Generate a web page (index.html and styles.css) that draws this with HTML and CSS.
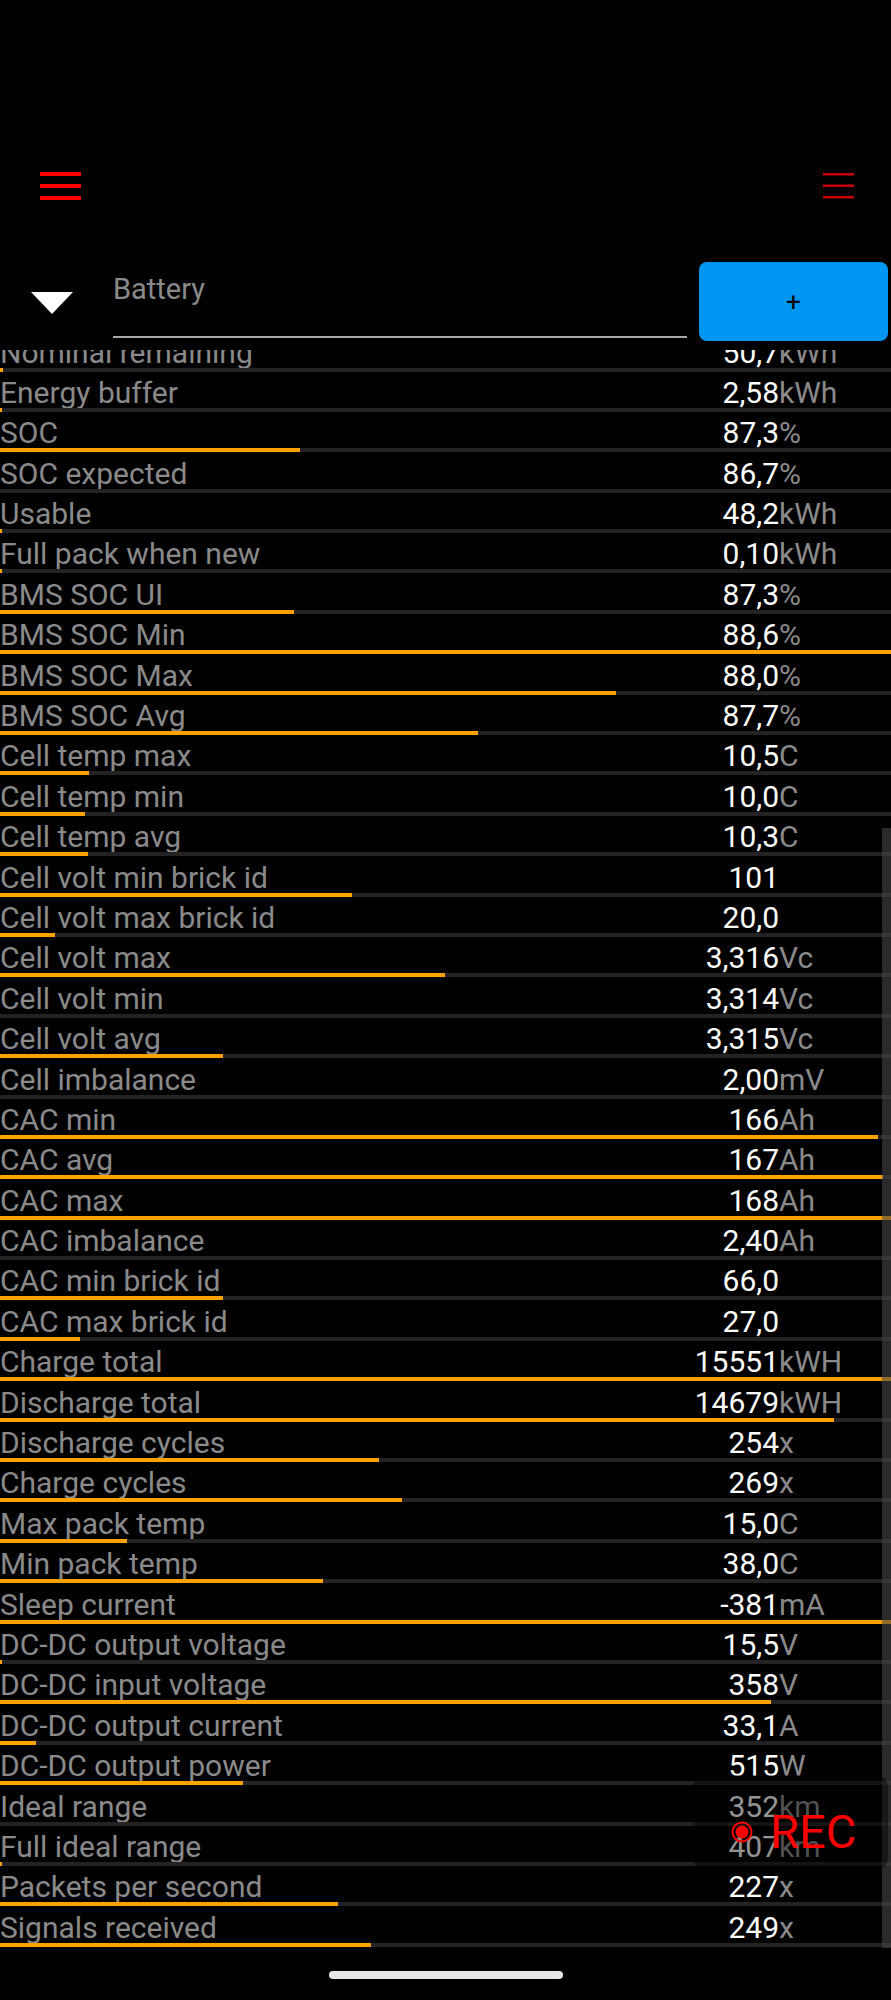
FILE: index.html
```html
<!DOCTYPE html>
<html>
<head>
<meta charset="utf-8">
<link rel="stylesheet" href="styles.css">
</head>
<body>
<div class="app">
  <div class="statusbar"></div>
  <div class="toolbar">
    <svg class="menu-left" width="41" height="28" viewBox="0 0 41 28"><rect x="0" y="0" width="41" height="4" fill="#ff0000"/><rect x="0" y="12" width="41" height="4" fill="#ff0000"/><rect x="0" y="24" width="41" height="4" fill="#ff0000"/></svg>
    <svg class="menu-right" width="31" height="26" viewBox="0 0 31 26"><rect x="0" y="0" width="31" height="2.5" fill="#c80000"/><rect x="0" y="11.5" width="31" height="2.5" fill="#c80000"/><rect x="0" y="23" width="31" height="2.5" fill="#c80000"/></svg>
  </div>
  <div class="selector">
    <div class="dropdown"><svg width="42" height="22" viewBox="0 0 42 22"><polygon points="0,0 42,0 21,22" fill="#ffffff"/></svg></div>
    <div class="field"><span class="placeholder">Battery</span></div>
    <div class="add-btn">+</div>
  </div>
  <div class="list">
    <div class="rows">
      <div class="row"><div class="line"><span class="label">Nominal remaining</span><span class="num">50,7</span><span class="unit">kWh</span></div><div class="track"><div class="fill" style="width:3px"></div></div></div>
      <div class="row"><div class="line"><span class="label">Energy buffer</span><span class="num">2,58</span><span class="unit">kWh</span></div><div class="track"><div class="fill" style="width:2px"></div></div></div>
      <div class="row"><div class="line"><span class="label">SOC</span><span class="num">87,3</span><span class="unit">%</span></div><div class="track"><div class="fill" style="width:300px"></div></div></div>
      <div class="row"><div class="line"><span class="label">SOC expected</span><span class="num">86,7</span><span class="unit">%</span></div><div class="track"><div class="fill" style="width:0px"></div></div></div>
      <div class="row"><div class="line"><span class="label">Usable</span><span class="num">48,2</span><span class="unit">kWh</span></div><div class="track"><div class="fill" style="width:2px"></div></div></div>
      <div class="row"><div class="line"><span class="label">Full pack when new</span><span class="num">0,10</span><span class="unit">kWh</span></div><div class="track"><div class="fill" style="width:2px"></div></div></div>
      <div class="row"><div class="line"><span class="label">BMS SOC UI</span><span class="num">87,3</span><span class="unit">%</span></div><div class="track"><div class="fill" style="width:294px"></div></div></div>
      <div class="row"><div class="line"><span class="label">BMS SOC Min</span><span class="num">88,6</span><span class="unit">%</span></div><div class="track"><div class="fill" style="width:891px"></div></div></div>
      <div class="row"><div class="line"><span class="label">BMS SOC Max</span><span class="num">88,0</span><span class="unit">%</span></div><div class="track"><div class="fill" style="width:616px"></div></div></div>
      <div class="row"><div class="line"><span class="label">BMS SOC Avg</span><span class="num">87,7</span><span class="unit">%</span></div><div class="track"><div class="fill" style="width:478px"></div></div></div>
      <div class="row"><div class="line"><span class="label">Cell temp max</span><span class="num">10,5</span><span class="unit">C</span></div><div class="track"><div class="fill" style="width:89px"></div></div></div>
      <div class="row"><div class="line"><span class="label">Cell temp min</span><span class="num">10,0</span><span class="unit">C</span></div><div class="track"><div class="fill" style="width:85px"></div></div></div>
      <div class="row"><div class="line"><span class="label">Cell temp avg</span><span class="num">10,3</span><span class="unit">C</span></div><div class="track"><div class="fill" style="width:88px"></div></div></div>
      <div class="row"><div class="line"><span class="label">Cell volt min brick id</span><span class="num">101</span><span class="unit"></span></div><div class="track"><div class="fill" style="width:352px"></div></div></div>
      <div class="row"><div class="line"><span class="label">Cell volt max brick id</span><span class="num">20,0</span><span class="unit"></span></div><div class="track"><div class="fill" style="width:55px"></div></div></div>
      <div class="row"><div class="line"><span class="label">Cell volt max</span><span class="num">3,316</span><span class="unit">Vc</span></div><div class="track"><div class="fill" style="width:445px"></div></div></div>
      <div class="row"><div class="line"><span class="label">Cell volt min</span><span class="num">3,314</span><span class="unit">Vc</span></div><div class="track"><div class="fill" style="width:0px"></div></div></div>
      <div class="row"><div class="line"><span class="label">Cell volt avg</span><span class="num">3,315</span><span class="unit">Vc</span></div><div class="track"><div class="fill" style="width:223px"></div></div></div>
      <div class="row"><div class="line"><span class="label">Cell imbalance</span><span class="num">2,00</span><span class="unit">mV</span></div><div class="track"><div class="fill" style="width:0px"></div></div></div>
      <div class="row"><div class="line"><span class="label">CAC min</span><span class="num">166</span><span class="unit">Ah</span></div><div class="track"><div class="fill" style="width:878px"></div></div></div>
      <div class="row"><div class="line"><span class="label">CAC avg</span><span class="num">167</span><span class="unit">Ah</span></div><div class="track"><div class="fill" style="width:883px"></div></div></div>
      <div class="row"><div class="line"><span class="label">CAC max</span><span class="num">168</span><span class="unit">Ah</span></div><div class="track"><div class="fill" style="width:891px"></div></div></div>
      <div class="row"><div class="line"><span class="label">CAC imbalance</span><span class="num">2,40</span><span class="unit">Ah</span></div><div class="track"><div class="fill" style="width:0px"></div></div></div>
      <div class="row"><div class="line"><span class="label">CAC min brick id</span><span class="num">66,0</span><span class="unit"></span></div><div class="track"><div class="fill" style="width:223px"></div></div></div>
      <div class="row"><div class="line"><span class="label">CAC max brick id</span><span class="num">27,0</span><span class="unit"></span></div><div class="track"><div class="fill" style="width:80px"></div></div></div>
      <div class="row"><div class="line"><span class="label">Charge total</span><span class="num">15551</span><span class="unit">kWH</span></div><div class="track"><div class="fill" style="width:891px"></div></div></div>
      <div class="row"><div class="line"><span class="label">Discharge total</span><span class="num">14679</span><span class="unit">kWH</span></div><div class="track"><div class="fill" style="width:834px"></div></div></div>
      <div class="row"><div class="line"><span class="label">Discharge cycles</span><span class="num">254</span><span class="unit">x</span></div><div class="track"><div class="fill" style="width:379px"></div></div></div>
      <div class="row"><div class="line"><span class="label">Charge cycles</span><span class="num">269</span><span class="unit">x</span></div><div class="track"><div class="fill" style="width:402px"></div></div></div>
      <div class="row"><div class="line"><span class="label">Max pack temp</span><span class="num">15,0</span><span class="unit">C</span></div><div class="track"><div class="fill" style="width:127px"></div></div></div>
      <div class="row"><div class="line"><span class="label">Min pack temp</span><span class="num">38,0</span><span class="unit">C</span></div><div class="track"><div class="fill" style="width:323px"></div></div></div>
      <div class="row"><div class="line"><span class="label">Sleep current</span><span class="num">-381</span><span class="unit">mA</span></div><div class="track"><div class="fill" style="width:891px"></div></div></div>
      <div class="row"><div class="line"><span class="label">DC-DC output voltage</span><span class="num">15,5</span><span class="unit">V</span></div><div class="track"><div class="fill" style="width:2px"></div></div></div>
      <div class="row"><div class="line"><span class="label">DC-DC input voltage</span><span class="num">358</span><span class="unit">V</span></div><div class="track"><div class="fill" style="width:771px"></div></div></div>
      <div class="row"><div class="line"><span class="label">DC-DC output current</span><span class="num">33,1</span><span class="unit">A</span></div><div class="track"><div class="fill" style="width:36px"></div></div></div>
      <div class="row"><div class="line"><span class="label">DC-DC output power</span><span class="num">515</span><span class="unit">W</span></div><div class="track"><div class="fill" style="width:243px"></div></div></div>
      <div class="row"><div class="line"><span class="label">Ideal range</span><span class="num">352</span><span class="unit">km</span></div><div class="track"><div class="fill" style="width:0px"></div></div></div>
      <div class="row"><div class="line"><span class="label">Full ideal range</span><span class="num">407</span><span class="unit">km</span></div><div class="track"><div class="fill" style="width:2px"></div></div></div>
      <div class="row"><div class="line"><span class="label">Packets per second</span><span class="num">227</span><span class="unit">x</span></div><div class="track"><div class="fill" style="width:338px"></div></div></div>
      <div class="row"><div class="line"><span class="label">Signals received</span><span class="num">249</span><span class="unit">x</span></div><div class="track"><div class="fill" style="width:371px"></div></div></div>
    </div>
    <div class="scrollbar"></div>
    <div class="rec-box">
      <svg class="rec-dot" width="22" height="22" viewBox="0 0 22 22"><circle cx="11" cy="11" r="9.5" fill="none" stroke="#ff0000" stroke-width="2"/><circle cx="11" cy="11" r="6.5" fill="#ff0000"/></svg>
      <span class="rec-text">REC</span>
    </div>
  </div>
  <div class="navbar"><div class="pill"></div></div>
</div>
</body>
</html>
```
FILE: styles.css
```css
* { box-sizing: border-box; }
html, body { margin: 0; padding: 0; background: #000; }
body { font-family: Roboto, "Noto Sans", "Liberation Sans", sans-serif; }
.app { width: 891px; height: 2000px; display: flex; flex-direction: column; background: #000; overflow: hidden; }
.statusbar { height: 160px; flex: none; }
.toolbar { height: 52px; flex: none; display: flex; align-items: center; justify-content: space-between; padding: 0 37px 0 40px; }
.toolbar svg { display: block; }
.selector { height: 79px; margin-top: 50px; flex: none; display: flex; align-items: stretch; }
.dropdown { width: 113px; flex: none; display: flex; align-items: center; padding-left: 31px; padding-top: 3px; }
.dropdown svg { display: block; }
.field { width: 574px; flex: none; border-bottom: 2px solid #a8a8a8; margin-bottom: 3px; padding-top: 10px; }
.placeholder { font-size: 29px; color: #8a8a8a; line-height: 34px; }
.add-btn { width: 189px; margin-left: 12px; flex: none; background: #0096f2; border-radius: 8px; display: flex; align-items: center; justify-content: center; font-size: 26px; color: #000; }
.list { position: relative; height: 1600px; margin-top: 9px; flex: none; overflow: hidden; }
.rows { margin-top: -18.9px; }
.row { height: 40.4px; display: flex; flex-direction: column; justify-content: flex-end; }
.line { display: grid; grid-template-columns: 1fr auto 112px; align-items: baseline; font-size: 30px; line-height: 30px; white-space: nowrap; }
.label { color: #8a8a8a; }
.num { color: #ffffff; text-align: right; }
.unit { color: #8a8a8a; }
.track { height: 4px; background: #232323; flex: none; }
.fill { height: 100%; background: #ffa200; }
.scrollbar { position: absolute; left: 882px; top: 478px; width: 9px; height: 1120px; background: rgba(70,70,70,0.6); }
.rec-box { position: absolute; left: 693px; top: 1425px; width: 195px; height: 95px; border-radius: 12px; background: rgba(0,0,0,0.42); display: flex; align-items: center; padding-left: 38px; padding-top: 18px; gap: 17px; }
.rec-dot { display: block; flex: none; }
.rec-text { color: #ff0000; font-size: 47px; line-height: 46px; }
.navbar { flex: 1; display: flex; justify-content: center; padding-top: 21px; }
.pill { width: 234px; height: 8px; border-radius: 4px; background: #e6e6e6; }
```
